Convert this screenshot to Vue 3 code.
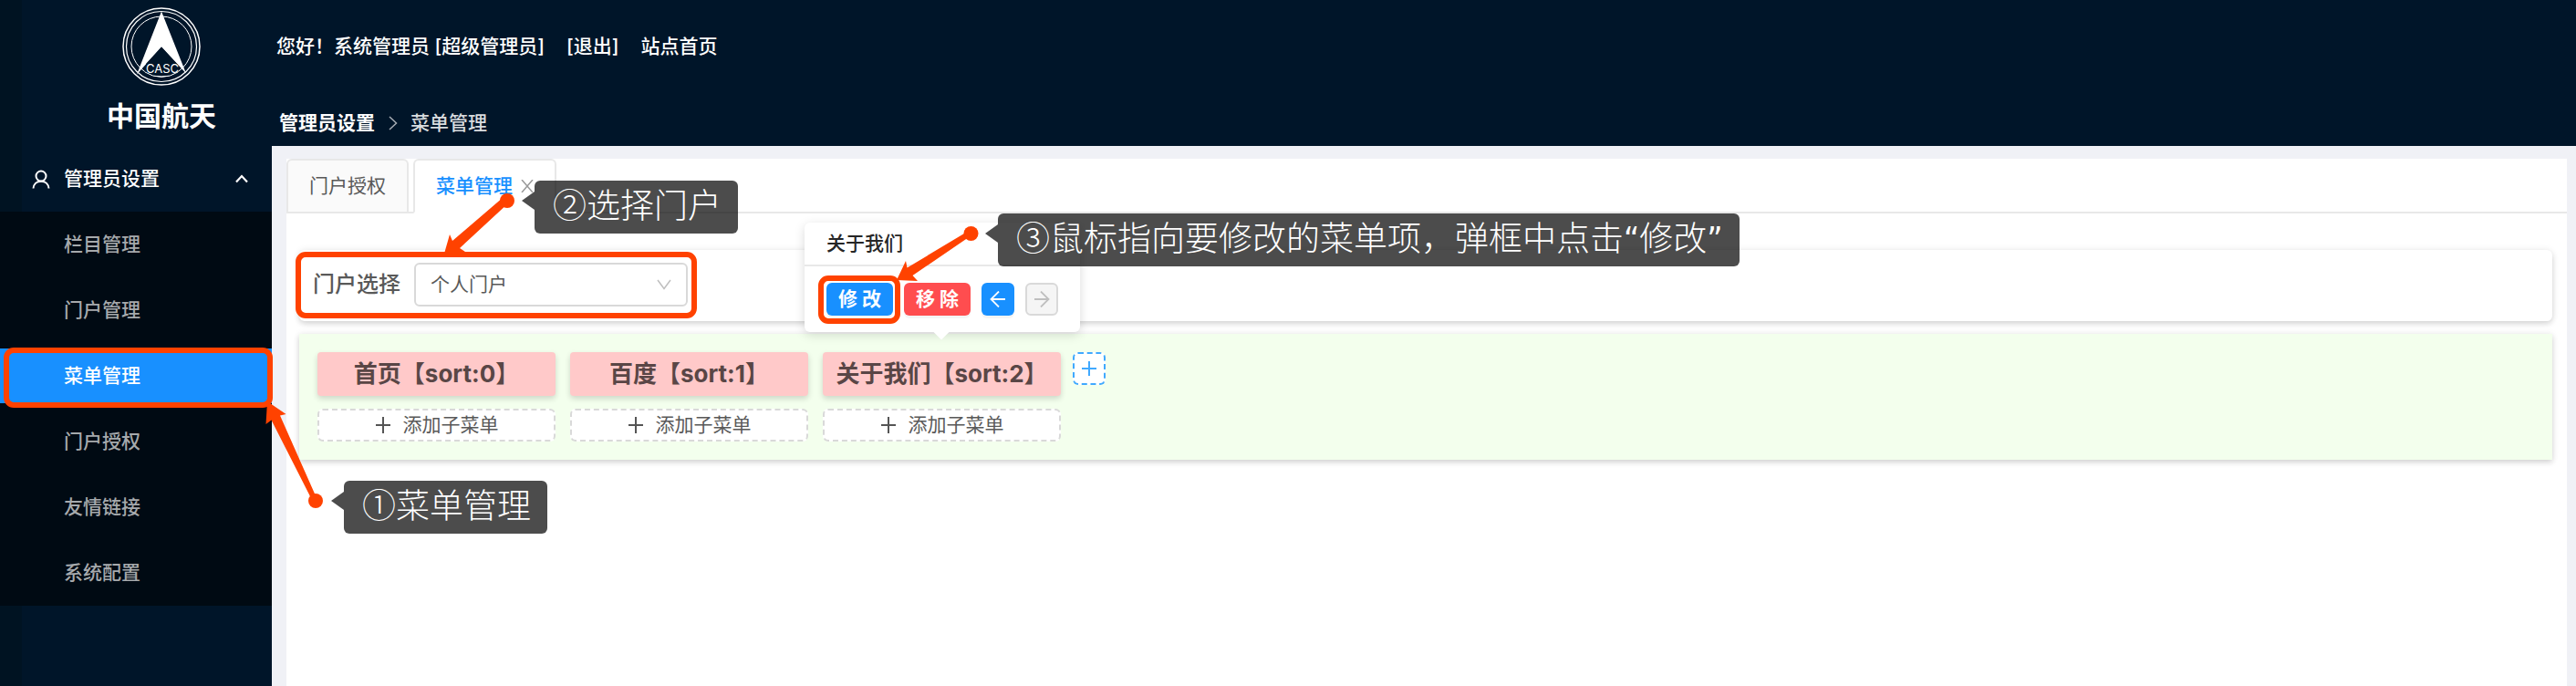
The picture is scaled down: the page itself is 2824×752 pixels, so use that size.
<script setup>
import { ref } from 'vue'

const menuItems = ['栏目管理', '门户管理', '菜单管理', '门户授权', '友情链接', '系统配置']
const activeItem = ref('菜单管理')
const portals = ['个人门户']
const portal = ref('个人门户')
const menus = [
  { name: '首页', sort: 0 },
  { name: '百度', sort: 1 },
  { name: '关于我们', sort: 2 }
]
const notes = [
  { id: 'one', text: '①菜单管理' },
  { id: 'two', text: '②选择门户' },
  { id: 'three', text: '③鼠标指向要修改的菜单项，弹框中点击', quoted: '修改' }
]
</script>

<template>
  <div class="app">
    <aside class="sidebar">
      <div class="brand">
        <svg class="logo" viewBox="0 0 86 86" role="img" aria-label="CASC">
          <g fill="none" stroke="#fff">
            <circle cx="43" cy="43" r="42" stroke-width="1.5" />
            <circle cx="43" cy="43" r="38.5" stroke-width="1.2" />
            <circle cx="43" cy="43" r="33" stroke-width="1" />
          </g>
          <path d="M25 62h36v13H25z" fill="#001529" />
          <path d="M43 4.500 70 72.500 43 43.500 16 73.500z" fill="#fff" />
          <path d="M43 43.500 61 63v9H26V62z" fill="#001529" />
          <path d="M25 71a33 33 0 0 0 36 0" fill="none" stroke="#fff" />
          <text x="44" y="71.500" text-anchor="middle" font-size="13" fill="#fff">CASC</text>
        </svg>
        <h1>中国航天</h1>
      </div>
      <nav>
        <button class="group" type="button" aria-expanded="true">
          <svg class="user" viewBox="0 0 20 21" fill="none" stroke="#fff" stroke-width="2">
            <circle cx="10" cy="7" r="5.500" />
            <path d="M1.500 20.500c.3-4.500 3.500-7.800 8.500-7.800s8.200 3.300 8.500 7.800" />
          </svg>
          <span>管理员设置</span>
          <svg class="fold" viewBox="0 0 14 10" fill="none" stroke="#fff" stroke-width="2.200">
            <path d="M1 8.500 7 2l6 6.500" />
          </svg>
        </button>
        <ul class="submenu">
          <li v-for="item in menuItems" :key="item">
            <a href="#" :class="{ active: item === activeItem }" @click.prevent="activeItem = item">{{ item }}</a>
          </li>
        </ul>
      </nav>
    </aside>

    <div class="main">
      <header class="header">
        <div class="account">
          <span>您好！系统管理员 [超级管理员]</span>
          <a href="#">[退出]</a>
          <a href="#">站点首页</a>
        </div>
        <div class="crumbs">
          <strong>管理员设置</strong>
          <svg viewBox="0 0 10 16" fill="none" stroke="#a6adb4" stroke-width="1.500">
            <path d="M1 1l7.500 7L1 15" />
          </svg>
          <span>菜单管理</span>
        </div>
      </header>

      <main class="panel">
        <div class="tabs" role="tablist">
          <button class="tab" type="button" role="tab" aria-selected="false">门户授权</button>
          <button class="tab current" type="button" role="tab" aria-selected="true">
            菜单管理
            <svg viewBox="0 0 14 14" fill="none" stroke="#999" stroke-width="1.500">
              <path d="M1 0l12 14M13 0L1 14" />
            </svg>
          </button>
        </div>

        <section class="card chooser">
          <label for="portal">门户选择</label>
          <div class="select">
            <select id="portal" v-model="portal">
              <option v-for="p in portals" :key="p">{{ p }}</option>
            </select>
            <svg viewBox="0 0 16 12" fill="none" stroke="#bfbfbf" stroke-width="1.500">
              <path d="M1 1l7 9.500L15 1" />
            </svg>
          </div>
        </section>

        <section class="card board">
          <div v-for="m in menus" :key="m.sort" class="column">
            <div class="item">{{ m.name }}【sort:{{ m.sort }}】</div>
            <button class="add-child" type="button">
              <svg viewBox="0 0 18 18" stroke="#555" stroke-width="2"><path d="M9 0v18M1 9h16" /></svg>
              <span>添加子菜单</span>
            </button>
          </div>
          <button class="add-menu" type="button" aria-label="添加菜单">
            <svg viewBox="0 0 18 18" stroke="#40a9ff" stroke-width="2"><path d="M9 1v16M1 9h16" /></svg>
          </button>
        </section>
      </main>
    </div>

    <div class="popover" role="dialog" aria-label="关于我们">
      <div class="pop-title">关于我们</div>
      <div class="pop-actions">
        <button class="btn primary" type="button">修 改</button>
        <button class="btn danger" type="button">移 除</button>
        <button class="btn icon primary" type="button" aria-label="左移">
          <svg viewBox="0 0 18 18" fill="none" stroke="#fff" stroke-width="1.800"><path d="M17 9H2M10 .5 1.500 9l8.500 8.500" /></svg>
        </button>
        <button class="btn icon" type="button" aria-label="右移" disabled>
          <svg viewBox="0 0 18 18" fill="none" stroke="#bfbfbf" stroke-width="1.800"><path d="M1 9h15M8 .5 16.500 9 8 17.500" /></svg>
        </button>
      </div>
    </div>

    <svg class="marks" width="1100" height="600" viewBox="0 0 1100 600" aria-hidden="true">
      <g fill="none" stroke="#ff4200" stroke-width="6">
        <rect x="7" y="384" width="289" height="60" rx="8" />
        <rect x="327" y="279" width="434" height="67" rx="8" />
        <rect x="900" y="305" width="84" height="47" rx="8" />
      </g>
      <g fill="#ff4200">
        <path d="M293 440 313.500 454 307 455.500 348 548 343 550 297.500 460.500 291.500 465z" />
        <circle cx="346" cy="549" r="8" />
        <path d="M487 278 493 257 496 264 552 216 558 222 504 272 510 276z" />
        <circle cx="556" cy="220" r="8" />
        <path d="M983 307 993 286 994.500 293.500 1062 253 1065 258 1000.500 302 1006 308z" />
        <circle cx="1064.500" cy="256" r="8" />
      </g>
    </svg>

    <div v-for="n in notes" :key="n.id" class="note" :class="n.id">
      {{ n.text }}<template v-if="n.quoted"><span class="quote">“</span>{{ n.quoted }}<span class="quote">”</span></template>
    </div>
  </div>
</template>

<style>
body {
  margin: 0;
}
</style>

<style scoped>
.app {
  position: relative;
  display: flex;
  min-height: 100vh;
  overflow: hidden;
  background: #f0f1f6;
  color: #595959;
  font: 21px/32px Inter, "Noto Sans CJK SC", sans-serif;
}
.app * {
  box-sizing: border-box;
}
button,
select {
  margin: 0;
  font: inherit;
  color: inherit;
}
a {
  color: inherit;
  text-decoration: none;
}
svg {
  flex: none;
}
.sidebar {
  flex: none;
  width: 298px;
  background: linear-gradient(to right, #001322 24px, #001529 24px);
  color: #fff;
}
.brand {
  display: flex;
  flex-direction: column;
  align-items: center;
  padding: 8px 0 16px 56px;
}
.logo {
  width: 86px;
  height: 86px;
}
h1 {
  margin: 10px 0 0;
  font-size: 30px;
  line-height: 46px;
  font-weight: 700;
}
.group {
  display: flex;
  align-items: center;
  width: 100%;
  height: 60px;
  padding: 0 26px 0 35px;
  border: 0;
  background: none;
  font-weight: 500;
}
.user {
  width: 20px;
  height: 21px;
  margin-right: 15px;
}
.fold {
  width: 14px;
  height: 10px;
  margin-left: auto;
}
.submenu {
  margin: 6px 0 0;
  padding: 0;
  list-style: none;
  background: #000a13;
  color: #a6a9ac;
}
.submenu li {
  padding: 6px 0;
}
.submenu a {
  display: block;
  padding-left: 70px;
  line-height: 60px;
  font-weight: 500;
}
.submenu .active {
  background: #1890ff;
  color: #fff;
}
.main {
  display: flex;
  flex: 1;
  flex-direction: column;
  min-width: 0;
}
.header {
  height: 160px;
  background: #001529;
  color: #fff;
}
.account {
  display: flex;
  align-items: center;
  gap: 24px;
  height: 102px;
  padding-left: 5px;
  font-weight: 500;
}
.crumbs {
  display: flex;
  align-items: center;
  height: 58px;
  padding: 8px 0 0 8px;
}
.crumbs strong {
  font-weight: 700;
}
.crumbs svg {
  width: 10px;
  height: 16px;
  margin: 0 14px 0 15px;
}
.crumbs span {
  color: #d9dcdf;
  font-weight: 500;
}
.panel {
  flex: 1;
  margin: 14px 10px 0 16px;
  background: #fff;
}
.tabs {
  display: flex;
  gap: 5px;
  height: 60px;
  border-bottom: 2px solid #e8e8e8;
}
.tab {
  height: 60px;
  padding: 0 23px;
  border: 2px solid #e8e8e8;
  border-radius: 6px 6px 0 0;
  background: #fafafa;
}
.current {
  display: flex;
  align-items: center;
  gap: 9px;
  border-bottom-color: #fff;
  background: #fff;
  color: #1890ff;
  font-weight: 500;
}
.current svg {
  width: 14px;
  height: 14px;
}
.card {
  margin: 0 16px 0 14px;
  box-shadow: 0 3px 6px rgba(0, 0, 0, 0.14), 0 0 8px rgba(0, 0, 0, 0.07);
}
.chooser {
  display: flex;
  align-items: center;
  gap: 15px;
  margin-top: 40px;
  padding: 14px 15px 16px;
  border-radius: 6px;
}
.chooser label {
  font-size: 24px;
  font-weight: 500;
}
.select {
  display: flex;
  align-items: center;
  position: relative;
  width: 300px;
}
.select select {
  width: 100%;
  height: 48px;
  padding: 0 16px;
  border: 2px solid #d9d9d9;
  border-radius: 6px;
  background: #fff;
  appearance: none;
}
.select svg {
  position: absolute;
  right: 18px;
  width: 16px;
  height: 12px;
  pointer-events: none;
}
.board {
  display: flex;
  align-items: flex-start;
  gap: 16px;
  margin-top: 14px;
  padding: 20px;
  background: #f3ffed;
}
.column {
  display: flex;
  flex-direction: column;
  gap: 14px;
  width: 261px;
}
.item {
  border-radius: 4px;
  background: #ffc9c9;
  box-shadow: 0 3px 6px rgba(0, 0, 0, 0.16);
  color: #594646;
  font-size: 26px;
  line-height: 48px;
  font-weight: 700;
  text-align: center;
  white-space: nowrap;
}
.add-child {
  display: flex;
  align-items: center;
  justify-content: center;
  gap: 13px;
  height: 36px;
  border: 2px dashed #d9d9d9;
  border-radius: 6px;
  background: #fff;
}
.add-child svg,
.add-menu svg,
.icon svg {
  width: 18px;
  height: 18px;
}
.add-menu {
  display: flex;
  align-items: center;
  justify-content: center;
  width: 36px;
  height: 36px;
  margin-left: -3px;
  padding: 0;
  border: 2px dashed #40a9ff;
  border-radius: 6px;
  background: #fff;
}
.popover {
  position: absolute;
  top: 244px;
  left: 882px;
  width: 302px;
  border-radius: 6px;
  background: #fff;
  box-shadow: 0 3px 12px rgba(0, 0, 0, 0.15);
}
.popover::after {
  content: "";
  position: absolute;
  bottom: -6px;
  left: 144px;
  width: 12px;
  height: 12px;
  background: #fff;
  transform: rotate(45deg);
}
.pop-title {
  padding: 0 24px;
  border-bottom: 2px solid #e8e8e8;
  color: #262626;
  line-height: 46px;
  font-weight: 500;
}
.pop-actions {
  display: flex;
  gap: 12px;
  padding: 18px 24px;
}
.btn {
  display: flex;
  align-items: center;
  justify-content: center;
  width: 73px;
  height: 36px;
  padding: 0;
  border: 0;
  border-radius: 6px;
  color: #fff;
  font-weight: 700;
  box-shadow: 0 3px 0 rgba(0, 0, 0, 0.04);
}
.primary {
  background: #1890ff;
}
.danger {
  background: #ff4d4f;
}
.icon {
  width: 36px;
}
.icon:disabled {
  border: 2px solid #d9d9d9;
  background: #f5f5f5;
  box-shadow: none;
}
.marks {
  position: absolute;
  top: 0;
  left: 0;
  pointer-events: none;
}
.note {
  position: absolute;
  height: 58px;
  padding: 0 18px 0 20px;
  border-radius: 6px;
  background: rgba(0, 0, 0, 0.7);
  color: #fff;
  font: 300 37px/54px "Noto Sans", "Noto Sans CJK SC", sans-serif;
  white-space: nowrap;
}
.quote {
  font-family: "DejaVu Sans Condensed", "DejaVu Sans", sans-serif;
}
.note::before {
  content: "";
  position: absolute;
  top: 12px;
  right: 100%;
  border: solid transparent;
  border-width: 10px 14px 10px 0;
  border-right-color: rgba(0, 0, 0, 0.7);
}
.one {
  top: 527px;
  left: 377px;
}
.two {
  top: 198px;
  left: 586px;
}
.three {
  top: 234px;
  left: 1094px;
}
</style>
